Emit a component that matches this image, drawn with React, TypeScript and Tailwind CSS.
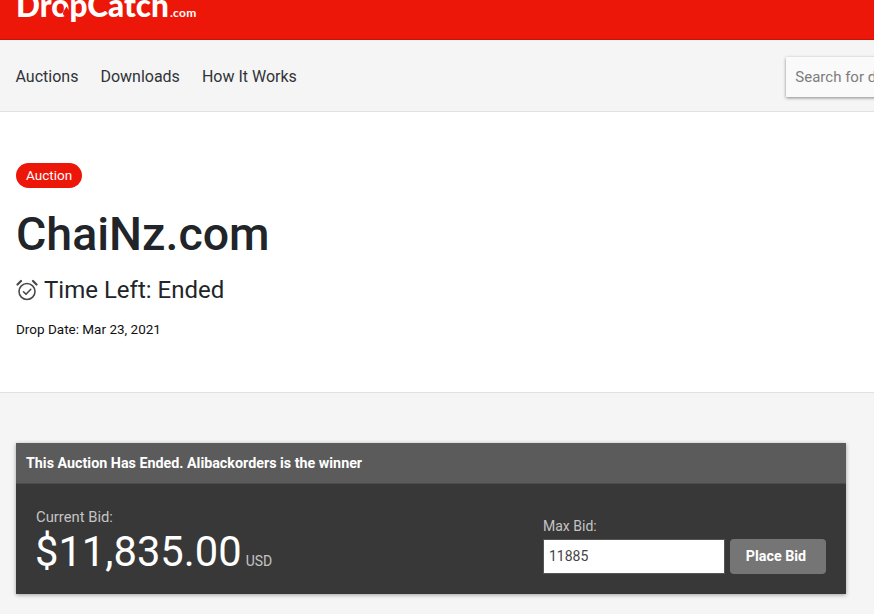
const ROBOTO = "font-['Roboto',sans-serif]";

function Logo() {
  return (
    <div className="-mt-[15px] flex items-baseline pl-4 text-white">
      <span className="relative font-['Lato',sans-serif] text-[31.500px] leading-[40px] font-black">
        DropCatch
        {/* drop inside the first o */}
        <svg viewBox="0 0 10 14" className="absolute top-[21px] left-[47px] h-[11px] w-[7px] fill-[#ed1709]">
          <path d="M5 0C3 4 0 7 0 9.500A5 4.500 0 0 0 10 9.500C10 7 7 4 5 0Z" />
        </svg>
      </span>
      <span className="ml-[1px] font-['Lato',sans-serif] text-xs font-bold tracking-[0.3px]">.com</span>
    </div>
  );
}

function AlarmIcon() {
  return (
    <svg viewBox="0 0 22 22" fill="none" stroke="#4a4a4a" strokeWidth="1.6" className="h-[22px] w-[22px] shrink-0">
      <circle cx="11" cy="12.500" r="8" />
      <path d="M7.500 12.800l2.500 2.500 4.800-5" strokeLinecap="round" strokeLinejoin="round" />
      <path d="M1.500 5.500L5 2M20.500 5.500L17 2" strokeWidth="2.200" strokeLinecap="round" />
    </svg>
  );
}

export default function App() {
  return (
    <div className={`h-[614px] w-[874px] overflow-hidden bg-[#f5f5f5] ${ROBOTO}`}>
      <header className="h-10 overflow-hidden border-b border-[#c9120a] bg-[#ed1709]">
        <Logo />
      </header>

      <nav className="flex h-[72px] items-center border-b border-[#e2e2e2] bg-[#f5f5f5] pt-[2px] pl-[15.5px]">
        <div className="flex shrink-0 gap-[22px] text-base text-[#2f3338]">
          <a>Auctions</a>
          <a>Downloads</a>
          <a>How It Works</a>
        </div>
        <div className="ml-[489px] flex h-10 w-[300px] shrink-0 items-center bg-[#fafafa] pt-[1px] pl-[9.5px] text-[15px] text-[#7d7d7d] shadow-[0_1px_3px_rgba(0,0,0,0.45)]">
          Search for domains
        </div>
      </nav>

      <section className="h-[281px] border-b border-[#e2e2e2] bg-white px-4 pt-[51px]">
        <span className="inline-block h-[25px] rounded-full bg-[#ed1709] px-[10px] text-[13.500px] leading-[25px] text-white">
          Auction
        </span>
        <h1 className="mt-[19px] text-[46.500px] leading-[54px] font-medium text-[#212529]">ChaiNz.com</h1>
        <div className="mt-[14px] flex items-center gap-[6px] text-2xl leading-[30px] text-[#212529]">
          <AlarmIcon />
          Time Left: Ended
        </div>
        <p className="mt-[14px] text-[13.500px] leading-[20px] text-[#111]">Drop Date: Mar 23, 2021</p>
      </section>

      <div className="mt-[50px] ml-4 w-[830px] shadow-[0_1px_4px_rgba(0,0,0,0.35)]">
        <div className="flex h-[41px] items-center border-b border-[#4a4d50] bg-[#5b5b5b] px-[10px] pt-[1px] text-[14.300px] font-bold text-white">
          This Auction Has Ended. Alibackorders is the winner
        </div>
        <div className="flex h-[110px] items-end justify-between bg-[#383838] px-5 pb-5">
          <div>
            <div className="mb-[3px] text-[14.800px] leading-[20px] text-[#c4c4c4]">Current Bid:</div>
            <div className="flex items-baseline text-white">
              <span className="-ml-[1px] text-[41.700px] leading-[44px]">$11,835.00</span>
              <span className="ml-[4px] text-sm text-[#c4c4c4]">USD</span>
            </div>
          </div>
          <div className="w-[283px]">
            <div className="mb-[3px] text-sm leading-[20px] text-[#c4c4c4]">Max Bid:</div>
            <div className="flex gap-[5px]">
              <input
                readOnly
                value="11885"
                className="h-[35px] w-[182px] border border-[#555] bg-white px-[5px] pb-[2px] text-sm text-[#444] outline-none"
              />
              <button
                type="button"
                className="h-[35px] w-[96px] rounded-[4px] bg-[#757575] pr-[4px] text-[14.300px] font-bold text-white"
              >
                Place Bid
              </button>
            </div>
          </div>
        </div>
      </div>
    </div>
  );
}
